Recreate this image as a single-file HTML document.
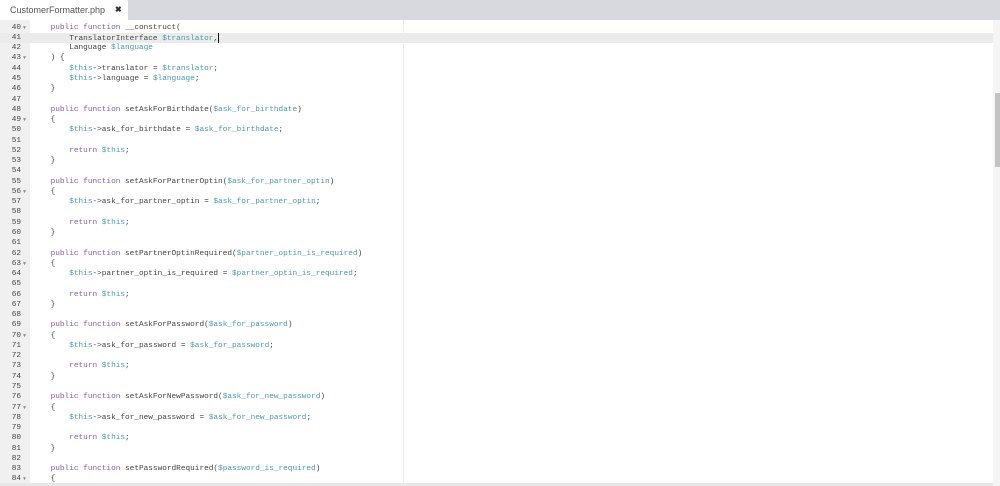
<!DOCTYPE html>
<html><head><style>
body{margin:0;width:1000px;height:486px;overflow:hidden;background:#fff;font-family:"Liberation Sans",sans-serif;position:relative}
.tabs{position:absolute;left:0;top:0;width:1000px;height:20px;background:#d7d9de}
.tab{position:absolute;left:0;top:0;width:128px;height:20px;background:#fff;font-size:9px;color:#555;line-height:20px}
.tab span{position:absolute;left:10px}
.tab b{position:absolute;left:115px;font-size:8px;color:#333}
.gut{position:absolute;left:0;top:20px;width:30px;height:466px;background:#f0f0f0}
.margin{position:absolute;left:403px;top:20px;width:1px;height:466px;background:#eee}
.sb{position:absolute;left:993px;top:20px;width:7px;height:466px;background:#f5f5f5}
.thumb{position:absolute;left:995px;top:93px;width:5px;height:74px;background:#c3c3c3}
.hs{position:absolute;left:0;top:483px;width:993px;height:3px;background:#e8e8e8}
.hl{position:absolute;left:0;top:33px;width:993px;height:10.3px;background:#ebebeb}
.code{position:absolute;left:0;top:22.7px;font-family:"Liberation Mono",monospace;font-size:7.75px;line-height:10.27px;color:#444}
.l{height:10.27px;position:relative}
.n{position:absolute;left:0;width:21px;text-align:right;color:#444}
.f{position:absolute;left:23px;font-size:5px;color:#888}
.t{position:absolute;left:32px;white-space:pre}
.k{color:#8e5aa6}.v{color:#4b9ab4}
.cur{display:inline-block;width:1px;height:10px;background:#000;vertical-align:middle}
</style></head><body>
<div class="tabs"><div class="tab"><span>CustomerFormatter.php</span><b>✖</b></div></div>
<div class="gut"></div>
<div class="hl"></div>
<div class="margin"></div>
<div class="sb"></div><div class="thumb"></div><div class="hs"></div>
<div class="code">
<div class="l"><span class="n">40</span><span class="f">▼</span><span class="t">    <span class="k">public function</span> __construct(</span></div>
<div class="l"><span class="n">41</span><span class="t">        TranslatorInterface <span class="v">$translator</span>,<span class="cur"></span></span></div>
<div class="l"><span class="n">42</span><span class="t">        Language <span class="v">$language</span></span></div>
<div class="l"><span class="n">43</span><span class="f">▼</span><span class="t">    ) {</span></div>
<div class="l"><span class="n">44</span><span class="t">        <span class="v">$this</span>->translator = <span class="v">$translator</span>;</span></div>
<div class="l"><span class="n">45</span><span class="t">        <span class="v">$this</span>->language = <span class="v">$language</span>;</span></div>
<div class="l"><span class="n">46</span><span class="t">    }</span></div>
<div class="l"><span class="n">47</span></div>
<div class="l"><span class="n">48</span><span class="t">    <span class="k">public function</span> setAskForBirthdate(<span class="v">$ask_for_birthdate</span>)</span></div>
<div class="l"><span class="n">49</span><span class="f">▼</span><span class="t">    {</span></div>
<div class="l"><span class="n">50</span><span class="t">        <span class="v">$this</span>->ask_for_birthdate = <span class="v">$ask_for_birthdate</span>;</span></div>
<div class="l"><span class="n">51</span></div>
<div class="l"><span class="n">52</span><span class="t">        <span class="k">return</span> <span class="v">$this</span>;</span></div>
<div class="l"><span class="n">53</span><span class="t">    }</span></div>
<div class="l"><span class="n">54</span></div>
<div class="l"><span class="n">55</span><span class="t">    <span class="k">public function</span> setAskForPartnerOptin(<span class="v">$ask_for_partner_optin</span>)</span></div>
<div class="l"><span class="n">56</span><span class="f">▼</span><span class="t">    {</span></div>
<div class="l"><span class="n">57</span><span class="t">        <span class="v">$this</span>->ask_for_partner_optin = <span class="v">$ask_for_partner_optin</span>;</span></div>
<div class="l"><span class="n">58</span></div>
<div class="l"><span class="n">59</span><span class="t">        <span class="k">return</span> <span class="v">$this</span>;</span></div>
<div class="l"><span class="n">60</span><span class="t">    }</span></div>
<div class="l"><span class="n">61</span></div>
<div class="l"><span class="n">62</span><span class="t">    <span class="k">public function</span> setPartnerOptinRequired(<span class="v">$partner_optin_is_required</span>)</span></div>
<div class="l"><span class="n">63</span><span class="f">▼</span><span class="t">    {</span></div>
<div class="l"><span class="n">64</span><span class="t">        <span class="v">$this</span>->partner_optin_is_required = <span class="v">$partner_optin_is_required</span>;</span></div>
<div class="l"><span class="n">65</span></div>
<div class="l"><span class="n">66</span><span class="t">        <span class="k">return</span> <span class="v">$this</span>;</span></div>
<div class="l"><span class="n">67</span><span class="t">    }</span></div>
<div class="l"><span class="n">68</span></div>
<div class="l"><span class="n">69</span><span class="t">    <span class="k">public function</span> setAskForPassword(<span class="v">$ask_for_password</span>)</span></div>
<div class="l"><span class="n">70</span><span class="f">▼</span><span class="t">    {</span></div>
<div class="l"><span class="n">71</span><span class="t">        <span class="v">$this</span>->ask_for_password = <span class="v">$ask_for_password</span>;</span></div>
<div class="l"><span class="n">72</span></div>
<div class="l"><span class="n">73</span><span class="t">        <span class="k">return</span> <span class="v">$this</span>;</span></div>
<div class="l"><span class="n">74</span><span class="t">    }</span></div>
<div class="l"><span class="n">75</span></div>
<div class="l"><span class="n">76</span><span class="t">    <span class="k">public function</span> setAskForNewPassword(<span class="v">$ask_for_new_password</span>)</span></div>
<div class="l"><span class="n">77</span><span class="f">▼</span><span class="t">    {</span></div>
<div class="l"><span class="n">78</span><span class="t">        <span class="v">$this</span>->ask_for_new_password = <span class="v">$ask_for_new_password</span>;</span></div>
<div class="l"><span class="n">79</span></div>
<div class="l"><span class="n">80</span><span class="t">        <span class="k">return</span> <span class="v">$this</span>;</span></div>
<div class="l"><span class="n">81</span><span class="t">    }</span></div>
<div class="l"><span class="n">82</span></div>
<div class="l"><span class="n">83</span><span class="t">    <span class="k">public function</span> setPasswordRequired(<span class="v">$password_is_required</span>)</span></div>
<div class="l"><span class="n">84</span><span class="f">▼</span><span class="t">    {</span></div>
</div>
</body></html>
